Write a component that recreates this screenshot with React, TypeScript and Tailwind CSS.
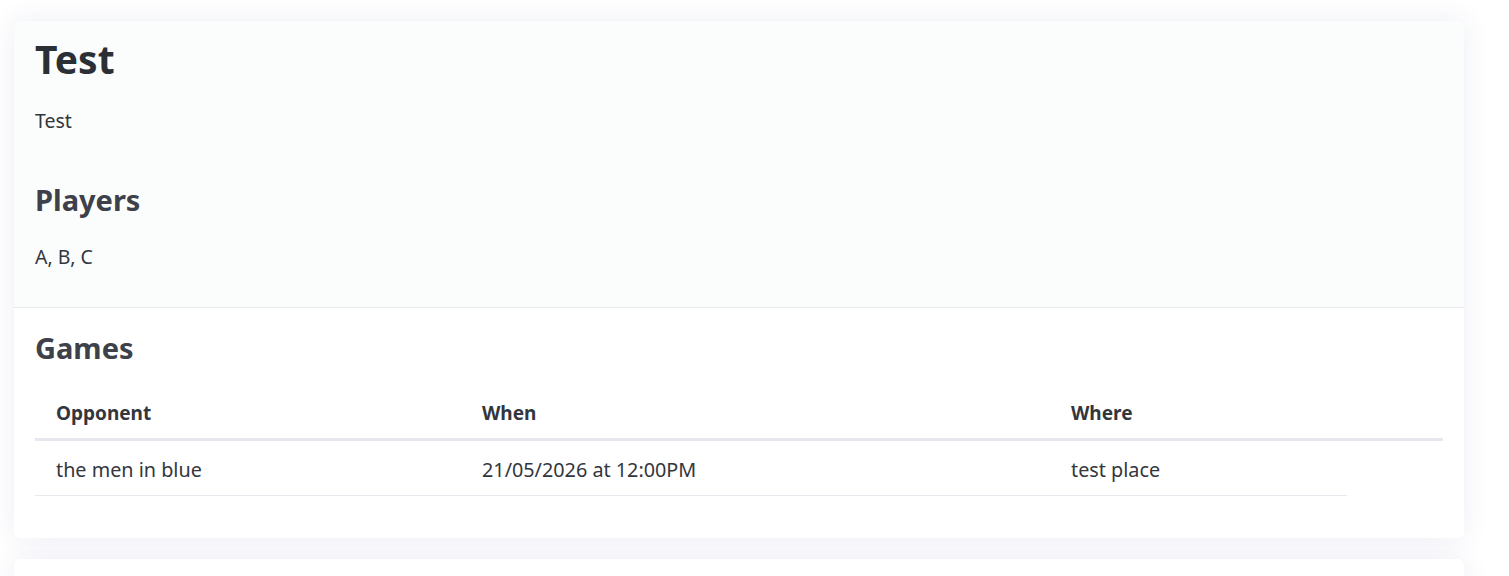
const games = [
    { opponent: 'the men in blue', when: '21/05/2026 at 12:00PM', where: 'test place' },
];

export default function App() {
    return (
        <div className="min-h-[576px] bg-white pt-[21px] pl-[14px] font-['Noto_Sans',sans-serif] text-[#33363d]">
            <div className="w-[1450px] overflow-hidden rounded-md bg-white shadow-[0_0_28px_rgba(60,70,140,0.09)]">
                {/* header section */}
                <div className="border-b border-[#e8e9ee] bg-[#fbfdfd] px-[21px] pt-[14px] pb-[37px]">
                    <h1 className="text-[39px] leading-[48px] font-bold text-[#2b2f36]">Test</h1>
                    <p className="mt-[24px] text-[19.5px] leading-[27px]">Test</p>
                    <h2 className="mt-[48px] text-[29px] leading-[36px] font-bold text-[#3e4149]">Players</h2>
                    <p className="mt-[25px] text-[19.5px] leading-[27px]">A, B, C</p>
                </div>
                {/* games */}
                <div className="px-[21px] pt-[22px] pb-[42px]">
                    <h2 className="text-[29px] leading-[36px] font-bold text-[#3e4149]">Games</h2>
                    <table className="mt-[22px] w-[1408px] table-fixed border-collapse text-left text-[19px] leading-[27px]">
                        <thead>
                            <tr className="border-b-[3px] border-[#e6e7ee]">
                                <th className="w-[426px] px-[21px] pt-[12px] pb-[11px] font-bold">Opponent</th>
                                <th className="w-[589px] px-[21px] pt-[12px] pb-[11px] font-bold">When</th>
                                <th className="w-[297px] px-[21px] pt-[12px] pb-[11px] font-bold">Where</th>
                                <th className="w-[96px]"></th>
                            </tr>
                        </thead>
                        <tbody className="text-[19.8px]">
                            {games.map((g) => (
                                <tr key={g.opponent}>
                                    <td className="border-b border-[#e8e9ee] px-[21px] pt-[15px] pb-[12px]">{g.opponent}</td>
                                    <td className="border-b border-[#e8e9ee] px-[21px] pt-[15px] pb-[12px]">{g.when}</td>
                                    <td className="border-b border-[#e8e9ee] px-[21px] pt-[15px] pb-[12px]">{g.where}</td>
                                    <td></td>
                                </tr>
                            ))}
                        </tbody>
                    </table>
                </div>
            </div>
            <div className="mt-[21px] h-[40px] w-[1450px] rounded-md bg-white shadow-[0_0_28px_rgba(60,70,140,0.09)]"></div>
        </div>
    );
}
